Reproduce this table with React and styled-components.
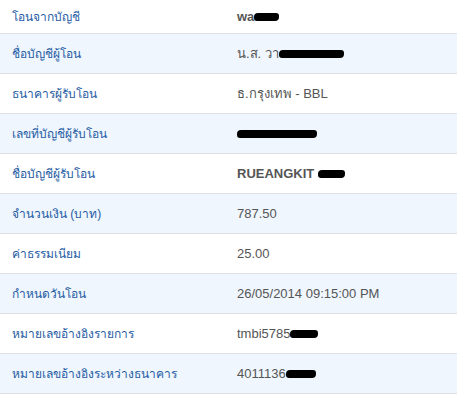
import React from "react"
import styled, { createGlobalStyle } from 'styled-components'

const GlobalStyle = createGlobalStyle`
  body {
    margin: 0;
    background: #fff;
    font-family: Tahoma, "Liberation Sans", "Noto Sans", "DejaVu Sans", sans-serif;
  }
`

const Table = styled.div`
  width: 457px;
  height: 394px;
  overflow: hidden;
  display: flex;
  flex-direction: column;
`

const Row = styled.div`
  display: grid;
  grid-template-columns: 225px 1fr;
  align-items: center;
  height: ${p => p.$first ? 33 : 39}px;
  flex-shrink: 0;
  border-bottom: 1px solid #dde1e6;
  background: ${p => p.$alt ? '#eff6fd' : '#ffffff'};
`

const Label = styled.div`
  padding-left: 12px;
  font-size: 12px;
  color: #1f5ca3;
  white-space: nowrap;
`

const Value = styled.div`
  padding-left: 12px;
  font-family: "Liberation Sans", Arial, sans-serif;
  font-size: 13px;
  color: #555;
  font-weight: ${p => p.$bold ? 'bold' : 'normal'};
  white-space: nowrap;
  display: flex;
  align-items: center;
`

const Redact = styled.span`
  display: inline-block;
  width: ${p => p.$w}px;
  height: ${p => p.$h || 8}px;
  background: #000;
  border-radius: 4px 3px 4px 3px;
  margin-left: ${p => p.$ml || 0}px;
`

const rows = [
  { label: 'โอนจากบัญชี', value: 'wa', bold: true, redact: 25 },
  { label: 'ชื่อบัญชีผู้โอน', value: 'น.ส. วา', redact: 65 },
  { label: 'ธนาคารผู้รับโอน', value: 'ธ.กรุงเทพ - BBL' },
  { label: 'เลขที่บัญชีผู้รับโอน', value: '', redact: 80 },
  { label: 'ชื่อบัญชีผู้รับโอน', value: 'RUEANGKIT ', bold: true, redact: 27 },
  { label: 'จำนวนเงิน (บาท)', value: '787.50' },
  { label: 'ค่าธรรมเนียม', value: '25.00' },
  { label: 'กำหนดวันโอน', value: '26/05/2014 09:15:00 PM' },
  { label: 'หมายเลขอ้างอิงรายการ', value: 'tmbi5785', redact: 28 },
  { label: 'หมายเลขอ้างอิงระหว่างธนาคาร', value: '4011136', redact: 30 },
]

const App = () => {
  return (
    <>
      <GlobalStyle />
      <Table>
        {rows.map((r, i) => (
          <Row key={i} $first={i === 0} $alt={i % 2 === 1}>
            <Label>{r.label}</Label>
            <Value $bold={r.bold}>
              {r.value && <span style={{ whiteSpace: 'pre' }}>{r.value}</span>}
              {r.redact && <Redact $w={r.redact} />}
            </Value>
          </Row>
        ))}
      </Table>
    </>
  )
}

export default App
